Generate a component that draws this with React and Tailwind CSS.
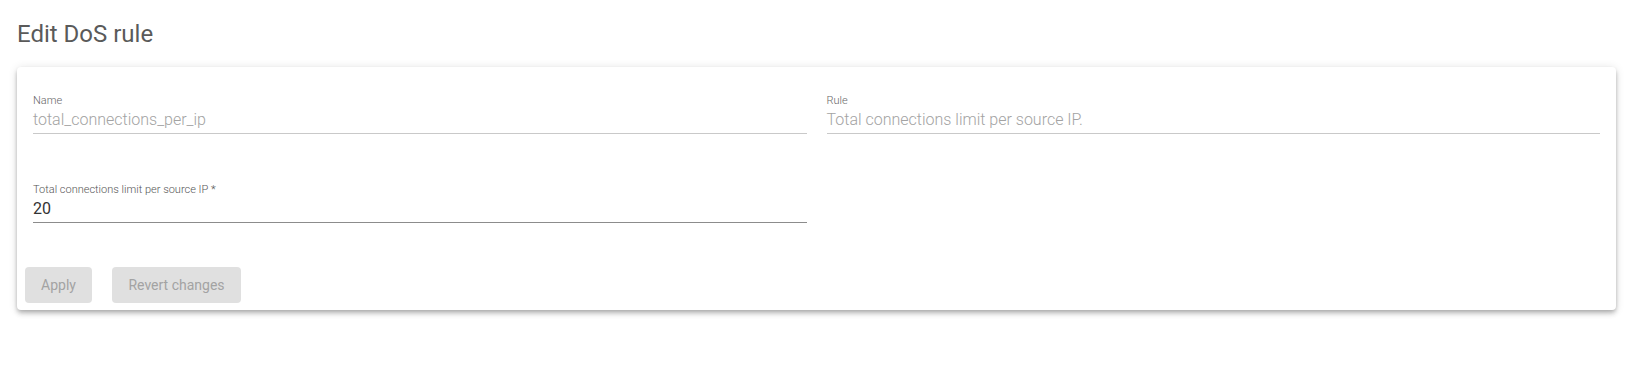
const Field = ({ label, value, disabled }) => (
  <div className="flex-1 min-w-0">
    <div className={`text-[11px] leading-[13px] font-light ${disabled ? 'text-[#666]' : 'text-[#555]'}`}>{label}</div>
    <div
      className={`mt-[3px] pb-[3px] text-[16px] leading-[20px] border-b ${
        disabled ? 'font-light text-[#a3a3a3] border-[#c9c9c9]' : 'text-[#333] border-[#8c8c8c]'
      }`}
    >
      {value}
    </div>
  </div>
);

const App = () => {
  return (
    <div className="w-[1635px] h-[372px] bg-white font-['Roboto',sans-serif]">
      <h1 className="pt-[18px] pl-[17px] text-[24px] leading-[32px] font-normal text-[#5a5a5a]">
        Edit DoS rule
      </h1>

      <div className="mt-[17px] ml-[17px] mr-[19px] bg-white rounded-[4px] shadow-[0_2px_4px_-1px_rgba(0,0,0,0.2),0_4px_5px_0_rgba(0,0,0,0.14),0_1px_10px_0_rgba(0,0,0,0.12)] pt-[27px] pb-[7px] px-4">
        <div className="flex gap-5">
          <Field label="Name" value="total_connections_per_ip" disabled />
          <Field label="Rule" value="Total connections limit per source IP." disabled />
        </div>

        <div className="flex gap-5 mt-[49px]">
          <Field label="Total connections limit per source IP *" value="20" />
          <div className="flex-1" />
        </div>

        <div className="flex gap-5 mt-[44px] -ml-2">
          <button
            type="button"
            disabled
            className="w-[67px] h-9 rounded-[4px] bg-[#e0e0e0] text-[#a3a3a3] text-[14px]"
          >
            Apply
          </button>
          <button
            type="button"
            disabled
            className="w-[129px] h-9 rounded-[4px] bg-[#e0e0e0] text-[#a3a3a3] text-[14px]"
          >
            Revert changes
          </button>
        </div>
      </div>
    </div>
  );
};

export default App;
